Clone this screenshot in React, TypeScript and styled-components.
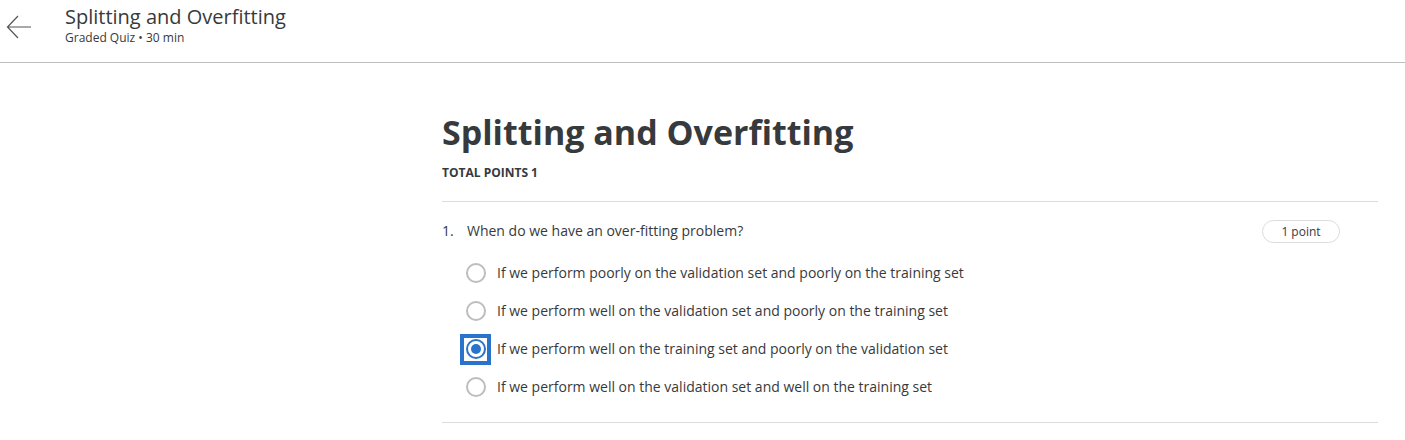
import React, { useState } from 'react';
import styled, { createGlobalStyle } from 'styled-components';

const GlobalStyle = createGlobalStyle`
  html, body {
    margin: 0;
    padding: 0;
    background: #fff;
    font-family: "Open Sans", "Noto Sans", sans-serif;
    color: #373a3c;
  }
`;

const Header = styled.header`
  display: flex;
  align-items: flex-start;
  height: 62px;
  border-bottom: 1px solid #bdbdbd;
  box-sizing: content-box;
`;

const BackButton = styled.button`
  width: 40px;
  height: 54px;
  margin-left: -1px;
  padding: 0;
  border: none;
  background: none;
  display: flex;
  align-items: center;
  justify-content: center;
  cursor: pointer;
`;

const HeaderText = styled.div`
  display: flex;
  flex-direction: column;
  margin-left: 26px;
  padding-top: 4px;
`;

const HeaderTitle = styled.div`
  font-size: 20px;
  line-height: 26px;
  color: #373a3c;
`;

const HeaderSub = styled.div`
  font-size: 12px;
  line-height: 16px;
  color: #373a3c;
`;

const Content = styled.main`
  width: 936px;
  margin-left: 442px;
  padding-top: 46px;
`;

const PageTitle = styled.h1`
  margin: 0;
  font-size: 34px;
  line-height: 46px;
  font-weight: 700;
  color: #373a3c;
`;

const TotalPoints = styled.div`
  margin-top: 10px;
  font-size: 12px;
  font-weight: 700;
  line-height: 16px;
  padding-bottom: 20px;
  border-bottom: 1px solid #dcdcdc;
`;

const Question = styled.section`
  padding-top: 18px;
  padding-bottom: 16px;
  border-bottom: 1px solid #dcdcdc;
`;

const QuestionHead = styled.div`
  display: flex;
  align-items: flex-start;
  padding-right: 38px;
`;

const QNum = styled.span`
  width: 25px;
  font-size: 14px;
  line-height: 22px;
`;

const QText = styled.span`
  flex: 1;
  font-size: 14px;
  line-height: 22px;
`;

const PointPill = styled.span`
  width: 78px;
  height: 23px;
  box-sizing: border-box;
  border: 1px solid #dcdcdc;
  border-radius: 12px;
  font-size: 12px;
  line-height: 22px;
  text-align: center;
`;

const Options = styled.div`
  display: flex;
  flex-direction: column;
  margin-top: 11px;
  margin-left: 18px;
`;

const Option = styled.label`
  display: flex;
  align-items: center;
  height: 38px;
  cursor: pointer;
  font-size: 14px;
`;

const RadioBox = styled.span<{ $focused: boolean }>`
  width: 31px;
  height: 31px;
  box-sizing: border-box;
  display: flex;
  align-items: center;
  justify-content: center;
  border: 4px solid ${p => (p.$focused ? '#2a73cc' : 'transparent')};
  margin-right: 6px;
`;

const Radio = styled.span<{ $checked: boolean }>`
  width: 20px;
  height: 20px;
  box-sizing: border-box;
  border-radius: 50%;
  border: 2px solid ${p => (p.$checked ? '#2a73cc' : '#bdbdbd')};
  display: flex;
  align-items: center;
  justify-content: center;
  &::after {
    content: '';
    width: 10px;
    height: 10px;
    border-radius: 50%;
    background: ${p => (p.$checked ? '#2a73cc' : 'transparent')};
  }
`;

const OptionText = styled.span`
  line-height: 20px;
`;

const options = [
  'If we perform poorly on the validation set and poorly on the training set',
  'If we perform well on the validation set and poorly on the training set',
  'If we perform well on the training set and poorly on the validation set',
  'If we perform well on the validation set and well on the training set',
];

const App: React.FC = () => {
  const [selected, setSelected] = useState(2);

  return (
    <>
      <GlobalStyle />
      <Header>
        <BackButton aria-label="Back">
          <svg width="26" height="24" viewBox="0 0 26 24" fill="none" stroke="#555" strokeWidth="1.2">
            <path d="M25 12H2M12 1L1.5 12L12 23" />
          </svg>
        </BackButton>
        <HeaderText>
          <HeaderTitle>Splitting and Overfitting</HeaderTitle>
          <HeaderSub>Graded Quiz • 30 min</HeaderSub>
        </HeaderText>
      </Header>
      <Content>
        <PageTitle>Splitting and Overfitting</PageTitle>
        <TotalPoints>TOTAL POINTS 1</TotalPoints>
        <Question>
          <QuestionHead>
            <QNum>1.</QNum>
            <QText>When do we have an over-fitting problem?</QText>
            <PointPill>1 point</PointPill>
          </QuestionHead>
          <Options>
            {options.map((o, i) => (
              <Option key={i} onClick={() => setSelected(i)}>
                <RadioBox $focused={selected === i}>
                  <Radio $checked={selected === i} />
                </RadioBox>
                <OptionText>{o}</OptionText>
              </Option>
            ))}
          </Options>
        </Question>
      </Content>
    </>
  );
};

export default App;
